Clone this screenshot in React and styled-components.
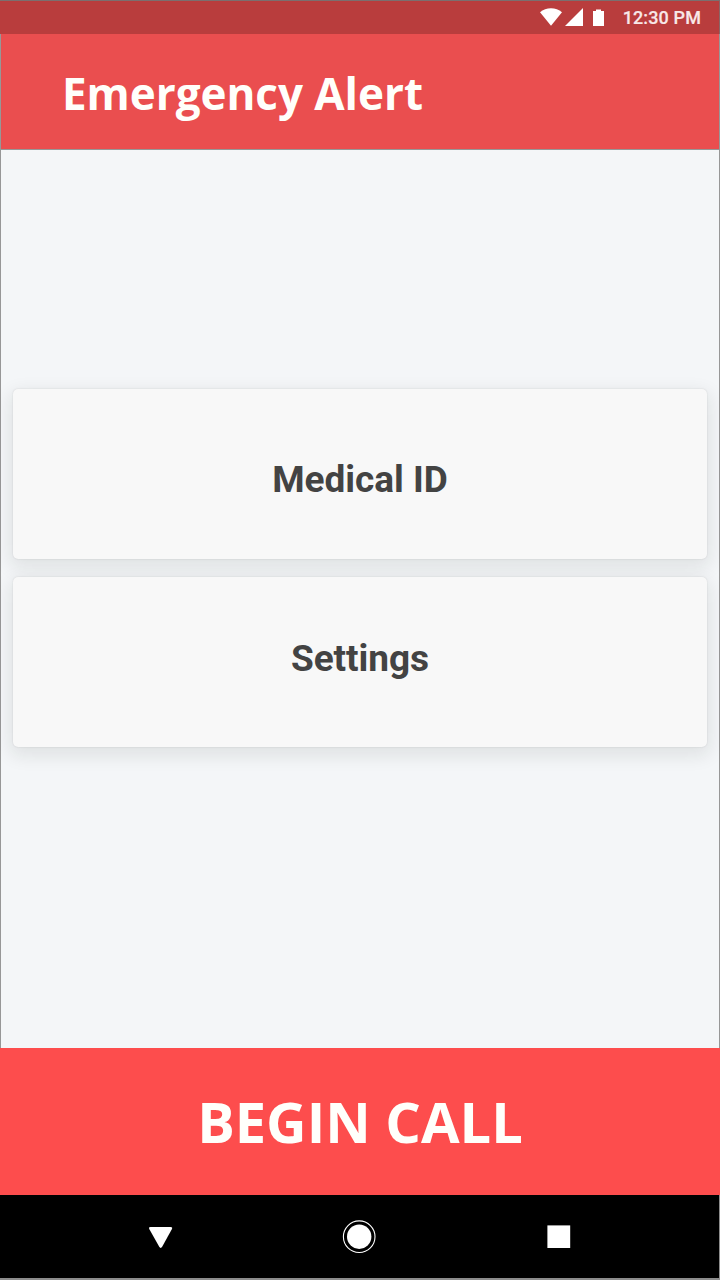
import React from 'react'
import styled, { createGlobalStyle } from 'styled-components'

const GlobalStyle = createGlobalStyle`
* {
  margin: 0;
  padding: 0;
  box-sizing: border-box;
}
body {
  background-color: #f4f6f8;
}
`

const Screen = styled.div`
  display: flex;
  flex-direction: column;
  width: 720px;
  height: 1280px;
  overflow: hidden;
  font-family: Roboto, sans-serif;
`

const StatusBar = styled.div`
  display: flex;
  justify-content: flex-end;
  align-items: center;
  height: 34px;
  padding-right: 18px;
  border-top: 1px solid #7b6f6f;
  border-right: 1px solid #8a6666;
  background-color: #b93d3d;
`

const StatusIcons = styled.svg`
  width: 66px;
  height: 20px;
  margin-right: 17px;
`

const Clock = styled.span`
  font-size: 18px;
  font-weight: 500;
  line-height: 33px;
  letter-spacing: 0.12px;
  color: #f8e8e8;
  -webkit-text-stroke: 0.2px #f8e8e8;
`

const Header = styled.header`
  display: flex;
  align-items: center;
  height: 116px;
  padding: 3px 0 0 61px;
  border: solid #979797;
  border-width: 0 1px 1px;
  background-color: #ea4e4f;
`

const Title = styled.h1`
  font-family: 'Open Sans', sans-serif;
  font-size: 44px;
  font-weight: 700;
  line-height: 61px;
  letter-spacing: -0.04px;
  color: #fffffb;
`

const Content = styled.main`
  display: flex;
  flex-direction: column;
  gap: 18px;
  height: 898px;
  padding: 239px 12px 0;
  border: solid #979797;
  border-width: 0 1px;
  background-color: #f4f6f8;
`

const Card = styled.button`
  height: 170px;
  padding-top: ${props => props.$drop || 0}px;
  padding-bottom: ${props => props.$lift || 0}px;
  border: none;
  border-radius: 5px;
  background-color: #f8f8f8;
  box-shadow: 0 0 2px rgba(0, 0, 0, 0.12), 0 6px 18px 3px rgba(20, 28, 20, 0.09);
  font-family: Roboto, sans-serif;
  font-size: 37px;
  font-weight: 700;
  line-height: 44px;
  letter-spacing: -0.05px;
  color: #434343;
`

const CallButton = styled.button`
  height: 147px;
  padding-bottom: 2px;
  border: none;
  background-color: #fd4d4d;
  font-family: 'Open Sans', sans-serif;
  font-size: 56px;
  font-weight: 700;
  line-height: 76px;
  color: #fffffb;
`

const NavBar = styled.nav`
  height: 85px;
  border: solid #8c8c8c;
  border-width: 0 1px 2px 0;
  background-color: #000;
`

const NavIcons = styled.svg`
  display: block;
  width: 719px;
  height: 83px;
`

export default function App() {
  return (
    <Screen>
      <GlobalStyle />
      <StatusBar>
        <StatusIcons viewBox="0 0 66 20" fill="#fff">
          <path d="M0 4.2C6-1.2 16-1.2 22 4.2L11 17.8z" />
          <path d="M25 18H43V0z" />
          <path d="M53 3H56V1.5H61V3H64V18H53z" />
        </StatusIcons>
        <Clock>12:30 PM</Clock>
      </StatusBar>
      <Header>
        <Title>Emergency Alert</Title>
      </Header>
      <Content>
        <Card $drop={11}>Medical ID</Card>
        <Card $lift={6}>Settings</Card>
      </Content>
      <CallButton>BEGIN CALL</CallButton>
      <NavBar>
        <NavIcons viewBox="0 0 719 83" fill="#fff">
          <path d="M150.5 32H170.5Q173 32 171.8 34.2L162.3 51.6Q160.7 54.2 159.1 51.6L149.4 34.2Q148.2 32 150.5 32z" />
          <circle cx="359.2" cy="41.7" r="12.2" />
          <circle cx="359.2" cy="41.7" r="15.8" fill="none" stroke="#fff" strokeWidth="1.1" />
          <rect x="547.4" y="30.4" width="22.8" height="22.6" />
        </NavIcons>
      </NavBar>
    </Screen>
  )
}
